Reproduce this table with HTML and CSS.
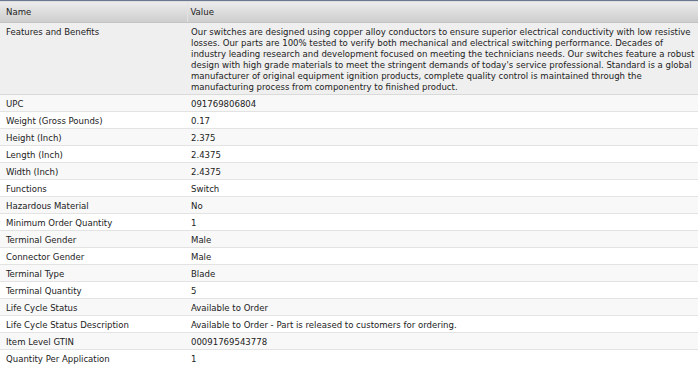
FILE: index.html
```html
<!DOCTYPE html>
<html>
<head>
<meta charset="utf-8">
<link rel="stylesheet" href="styles.css">
</head>
<body>
<table class="grid">
  <colgroup><col class="c-name"><col class="c-value"></colgroup>
  <thead>
    <tr><th>Name</th><th>Value</th></tr>
  </thead>
  <tbody>
    <tr class="hl"><td>Features and Benefits</td><td class="long">Our switches are designed using copper alloy conductors to ensure superior electrical conductivity with low resistive<br>losses. Our parts are 100% tested to verify both mechanical and electrical switching performance. Decades of<br>industry leading research and development focused on meeting the technicians needs. Our switches feature a robust<br>design with high grade materials to meet the stringent demands of today's service professional. Standard is a global<br>manufacturer of original equipment ignition products, complete quality control is maintained through the<br>manufacturing process from componentry to finished product.</td></tr>
    <tr><td>UPC</td><td>091769806804</td></tr>
    <tr><td>Weight (Gross Pounds)</td><td>0.17</td></tr>
    <tr><td>Height (Inch)</td><td>2.375</td></tr>
    <tr><td>Length (Inch)</td><td>2.4375</td></tr>
    <tr><td>Width (Inch)</td><td>2.4375</td></tr>
    <tr><td>Functions</td><td>Switch</td></tr>
    <tr><td>Hazardous Material</td><td>No</td></tr>
    <tr><td>Minimum Order Quantity</td><td>1</td></tr>
    <tr><td>Terminal Gender</td><td>Male</td></tr>
    <tr><td>Connector Gender</td><td>Male</td></tr>
    <tr><td>Terminal Type</td><td>Blade</td></tr>
    <tr><td>Terminal Quantity</td><td>5</td></tr>
    <tr><td>Life Cycle Status</td><td>Available to Order</td></tr>
    <tr><td>Life Cycle Status Description</td><td>Available to Order - Part is released to customers for ordering.</td></tr>
    <tr><td>Item Level GTIN</td><td>00091769543778</td></tr>
    <tr><td>Quantity Per Application</td><td>1</td></tr>
  </tbody>
</table>
</body>
</html>
```

FILE: styles.css
```css
html, body {
  margin: 0;
  padding: 0;
  overflow: hidden;
  background: #ffffff;
}
.grid {
  width: 730px;
  table-layout: fixed;
  border-collapse: collapse;
  font-family: "DejaVu Sans Condensed", "DejaVu Sans", sans-serif;
  font-size: 9.5px;
  color: #222222;
}
.c-name { width: 187px; }
.grid thead th {
  height: 21px;
  padding: 0 0 0 6px;
  text-align: left;
  font-weight: normal;
  color: #222222;
  border-top: 1px solid #6b7891;
  border-bottom: 1px solid #c4c4c4;
  background: linear-gradient(#ececec, #cdcdcd);
}
.grid thead th + th {
  padding-left: 3px;
  border-left: 1px solid #e2e2e2;
}
.grid td {
  padding: 3px 0 2px 6px;
  line-height: 11px;
  vertical-align: top;
  border-bottom: 1px solid #e3e3e3;
}
.grid td + td {
  padding-left: 4px;
}
.grid td.long {
  white-space: nowrap;
  overflow: hidden;
}
.grid tbody tr:nth-child(even) td { background: #f8f8f8; }
.grid tbody tr.hl td { background: #efefef; border-bottom-color: #dadada; }
```
